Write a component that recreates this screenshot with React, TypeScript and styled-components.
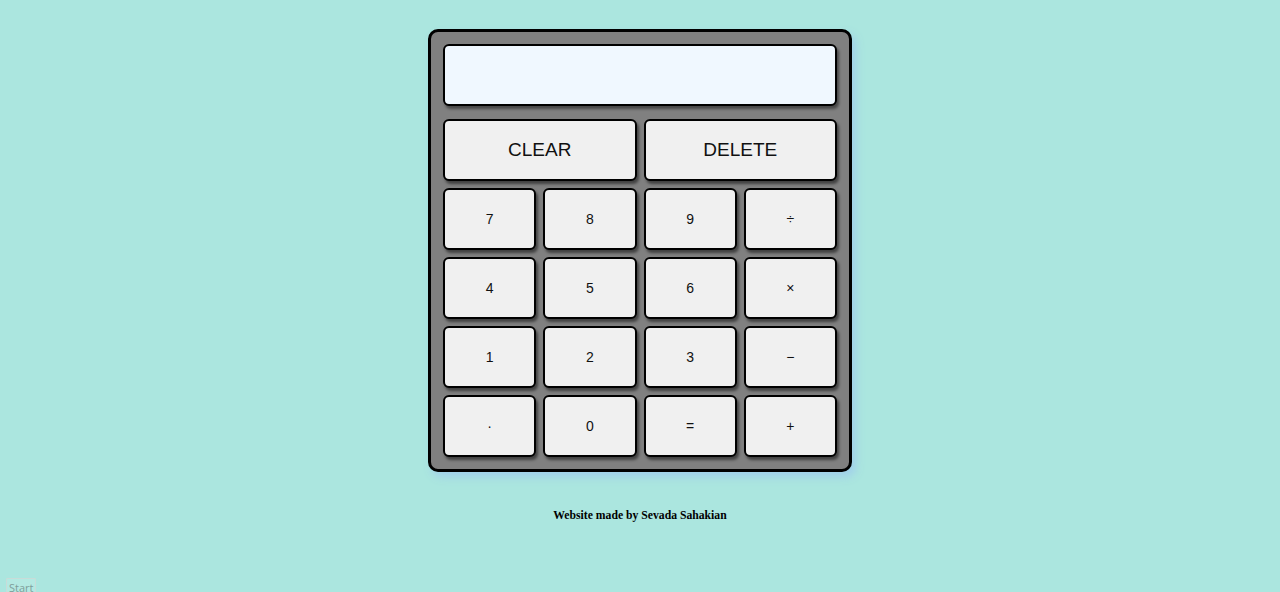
import React from "react";
import styled, { createGlobalStyle } from "styled-components";

const Global = createGlobalStyle`
  html, body { margin: 0; padding: 0; }
  body {
    background: #abe6df;
    font-family: "Liberation Serif", serif;
    height: 592px;
    overflow: hidden;
  }
`;

const Page = styled.main`
  display: flex;
  flex-direction: column;
  align-items: center;
  padding-top: 29px;
`;

const Calculator = styled.div`
  width: 394px;
  padding: 12px;
  background: #808080;
  border: 3px solid #000;
  border-radius: 10px;
  box-shadow: 4px 5px 8px rgba(160, 205, 235, 0.9);
  display: flex;
  flex-direction: column;
  gap: 13px;
`;

const Display = styled.div`
  height: 58px;
  background: #f0f8ff;
  border: 2px solid #000;
  border-radius: 6px;
  box-shadow: 2px 3px 3px rgba(0, 0, 0, 0.45);
`;

const Keys = styled.div`
  display: grid;
  grid-template-columns: repeat(4, 1fr);
  grid-auto-rows: 62px;
  gap: 7px;
`;

const Key = styled.button<{ $wide?: boolean }>`
  grid-column: span ${(p) => (p.$wide ? 2 : 1)};
  background: #f0f0f0;
  border: 2px solid #000;
  border-radius: 6px;
  box-shadow: 2px 3px 3px rgba(0, 0, 0, 0.5);
  font-family: "Liberation Sans", Arial, sans-serif;
  font-size: ${(p) => (p.$wide ? "19px" : "14px")};
  color: #111;
  padding: 0;
  cursor: pointer;
`;

const Footer = styled.p`
  margin: 37px 0 0;
  font-family: "Liberation Serif", serif;
  font-weight: bold;
  font-size: 11.7px;
  color: #000;
`;

const Start = styled.button`
  position: fixed;
  left: 6px;
  top: 578px;
  padding: 1px 2px;
  font-family: "Open Sans", "Liberation Sans", sans-serif;
  font-size: 11px;
  color: #7f9e9a;
  background: #b4e9e2;
  border: 1px solid #c8dcd8;
  border-radius: 1px;
`;

const rows = [
  ["7", "8", "9", "÷"],
  ["4", "5", "6", "×"],
  ["1", "2", "3", "−"],
  ["·", "0", "=", "+"],
];

export default function App() {
  return (
    <>
      <Global />
      <Page>
        <Calculator>
          <Display />
          <Keys>
            <Key $wide>CLEAR</Key>
            <Key $wide>DELETE</Key>
            {rows.flat().map((k, i) => (
              <Key key={i}>{k}</Key>
            ))}
          </Keys>
        </Calculator>
        <Footer>Website made by Sevada Sahakian</Footer>
      </Page>
      <Start>Start</Start>
    </>
  );
}
